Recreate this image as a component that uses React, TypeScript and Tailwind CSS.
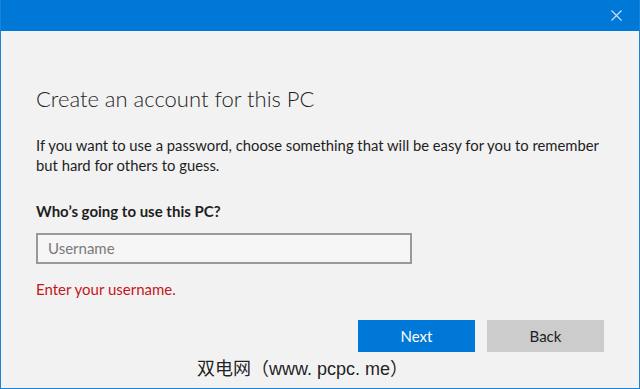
export default function App() {
  return (
    <div className="w-[640px] h-[389px] bg-[#f2f2f2] border border-t-0 border-[#1883d7] flex flex-col font-['Lato',sans-serif] text-[#1e1e1e] overflow-hidden">
      <div className="h-[31px] shrink-0 bg-[#0078d7] flex items-center justify-end pr-[17px]">
        <svg width="11" height="11" viewBox="0 0 11 11" className="text-[#cfe3f6]">
          <path d="M0.5 0.5 L10.5 10.5 M10.5 0.5 L0.5 10.5" stroke="currentColor" strokeWidth="1.1" />
        </svg>
      </div>
      <div className="flex flex-col pl-[35px] pr-[35px] whitespace-nowrap">
        <h1 className="mt-[52px] text-[22px] leading-[32px] font-light">Create an account for this PC</h1>
        <p className="mt-[20px] text-[14.8px] leading-[20px]">
          If you want to use a password, choose something that will be easy for you to remember
          <br />
          but hard for others to guess.
        </p>
        <div className="mt-[26px] text-[15px] leading-[20px] font-bold">Who’s going to use this PC?</div>
        <div className="mt-[12px] w-[376px] h-[31px] border-2 border-[#999999] bg-[#f6f6f6] flex items-center pl-[10px] text-[15px] text-[#7a7a7a]">
          Username
        </div>
        <div className="mt-[15px] text-[15px] leading-[20px] text-[#c4161c]">Enter your username.</div>
        <div className="mt-[21px] flex justify-end gap-[12px]">
          <button className="w-[117px] h-[32px] bg-[#0078d7] text-white text-[15px]">Next</button>
          <button className="w-[117px] h-[32px] bg-[#cccccc] text-[#1e1e1e] text-[15px]">Back</button>
        </div>
        <div className="mt-[6px] pl-[161px] text-[18px] leading-[22px] text-[#222] font-['Liberation_Sans','Noto_Sans_CJK_SC',sans-serif] [text-shadow:0_0_2px_#fff]">
          双电网（www. pcpc. me）
        </div>
      </div>
    </div>
  );
}
